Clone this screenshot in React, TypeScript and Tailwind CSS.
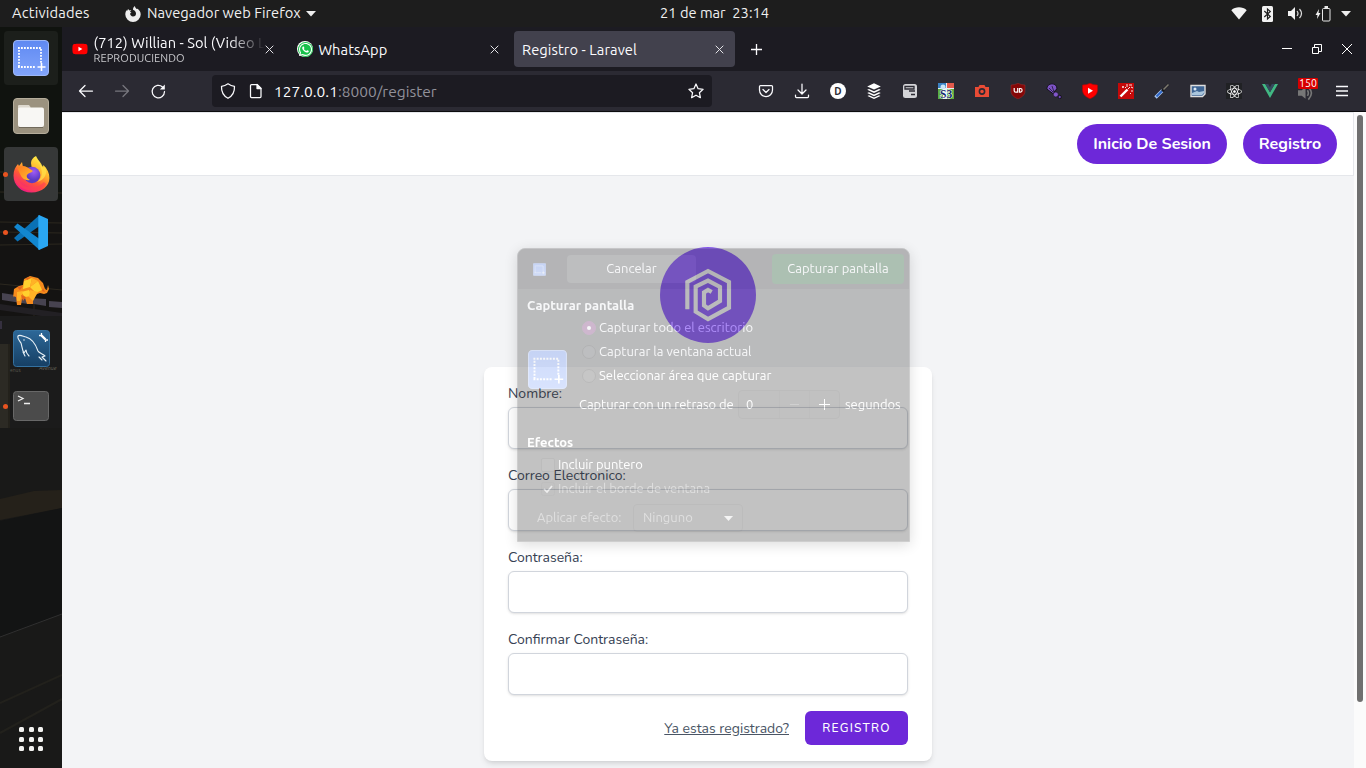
import React from "react";
import { FaYoutube, FaWhatsapp, FaReact } from "react-icons/fa";

const ubuntu = "font-['Ubuntu','Noto_Sans',sans-serif]";
const nunito = "font-['Nunito','Open_Sans',sans-serif]";

function Close() {
  return (
    <svg width="9" height="9" viewBox="0 0 9 9" stroke="#e4e4e8" strokeWidth="1">
      <path d="M.7.7l7.6 7.6M8.3.7L.7 8.3" />
    </svg>
  );
}

function TopBar() {
  return (
    <header className="relative flex h-[27px] shrink-0 items-center bg-[#1d1d1d] text-[14.667px] text-[#f0f0f0]">
      <span className="ml-3 w-[78px] whitespace-nowrap pb-px tracking-[0.2px]">Actividades</span>
      <svg className="ml-[35px]" width="16" height="16" viewBox="0 0 16 16">
        <path fill="#eee" d="M8 16a7.7 7.7 0 0 1-7.7-7.6c0-2 .7-3.4 1.4-4.4l.2 1.3L3.1 3l1.3 1.4c.7-.2 1.5-.1 2 .2-.8.4-1.3.8-1.3 1.5l1.4.3-1.4 1.2c.1 1.6 1.2 2.9 2.9 2.9 2 0 3-1.500 3-3.100C11 5.500 9.400 4.300 8 3.700 8 2.200 8.700.8 9.900 0c.2 1.300.9 2.200 1.700 2.900l1-.1c2 1.400 3.100 3.300 3.100 5.600A7.700 7.700 0 0 1 8 16z" />
      </svg>
      <span className="ml-[6px] w-[155px] whitespace-nowrap pb-px tracking-[0.04px]">Navegador web Firefox</span>
      <svg className="ml-1" width="10" height="6" viewBox="0 0 10 6"><path d="M0 0h10L5 5.500z" fill="#eee" /></svg>
      <span className="ml-[344px] w-[111px] whitespace-pre pb-px">21 de mar  23:14</span>
      <div className="ml-auto flex items-center pr-[15px]">
        <svg width="16" height="13" viewBox="0 0 16 13"><path d="M.3 3.200C4.500-.6 11.500-.6 15.700 3.200L8 12.500z" fill="#f2f2f2" /></svg>
        <svg className="ml-[15px]" width="11" height="16" viewBox="0 0 11 16">
          <rect width="11" height="16" rx="1.500" fill="#f2f2f2" />
          <path d="M2.300 5l6 5.500L5.500 13V3l2.800 2.500-6 5.500" fill="none" stroke="#1d1d1d" strokeWidth="1.200" />
        </svg>
        <svg className="ml-[15px]" width="15" height="13" viewBox="0 0 15 13">
          <path d="M0 4h3l4-4v13L3 9H0z" fill="#f2f2f2" />
          <path d="M9 4q2 2.500 0 5M11.500 2q4 4.500 0 9" fill="none" stroke="#ddd" strokeWidth="1.200" />
        </svg>
        <svg className="ml-[12px]" width="16" height="16" viewBox="0 0 16 16">
          <path d="M4 3L.5 9h2L2 13l3.500-6h-2z" fill="#f2f2f2" />
          <rect x="7.500" y="2.500" width="7.500" height="12.500" rx="1" fill="none" stroke="#e8e8e8" />
          <path d="M9.500 1h3.500" stroke="#e8e8e8" strokeWidth="2" />
        </svg>
        <svg className="ml-[10px]" width="10" height="6" viewBox="0 0 10 6"><path d="M0 0h10L5 5.500z" fill="#eee" /></svg>
      </div>
    </header>
  );
}

function ShotIcon({ size }: { size: number }) {
  return (
    <svg width={size} height={size} viewBox="0 0 36 36">
      <defs>
        <linearGradient id="shot" x2="0" y2="1"><stop stopColor="#5f89f2" /><stop offset="1" stopColor="#82a5fb" /></linearGradient>
      </defs>
      <rect x=".5" y=".5" width="35" height="35" rx="3.500" fill="url(#shot)" stroke="#9db7f7" />
      <path d="M5 8h24M6 10v17M5 27h18M28 9v15" stroke="#fff" strokeWidth="1.800" strokeDasharray="1.800 1.200" fill="none" />
      <path d="M24.500 27h8M28.500 23v8" stroke="#fff" strokeWidth="1.600" />
    </svg>
  );
}

function FirefoxIcon() {
  return (
    <svg width="37" height="38" viewBox="0 0 37 38">
      <defs>
        <linearGradient id="ffa" x1=".8" y1=".05" x2=".25" y2="1">
          <stop stopColor="#fff24a" /><stop offset=".35" stopColor="#ffb32c" /><stop offset=".62" stopColor="#ff5a36" /><stop offset="1" stopColor="#f0148a" />
        </linearGradient>
        <radialGradient id="ffb" cx=".6" cy=".3"><stop stopColor="#a05cf5" /><stop offset="1" stopColor="#5b3bc4" /></radialGradient>
        <linearGradient id="ffc" x2="1" y2="1"><stop stopColor="#ff7a22" /><stop offset="1" stopColor="#ffc02e" /></linearGradient>
      </defs>
      <path fill="url(#ffa)" d="M23 1c1 3 4 5 5 9l2 2 .4-2c4 4 6 8 6 13C36.400 31 29 37.500 18.500 37.500 8 37.500.5 30 .5 20.500c0-5 2-9 4.500-11.500L6 11l3-4 1 5 6 1 3 2-1-7c0-3 2-5.500 5-7z" />
      <circle cx="19" cy="20" r="8.300" fill="url(#ffb)" />
      <path fill="url(#ffc)" d="M4 12l6-1c3 0 5 2 7 3l3 2c-2 2-5 2-6 4-1 2 1 4 3 5-4 1-8-1-10-6z" />
      <path fill="#ffe14a" d="M22 2c1 4 5 6 6 11 2 6 0 11-4 14 8-2 11-9 8-15l-2 1c-1-6-6-8-8-11z" opacity=".75" />
      <path fill="none" stroke="#ff3f55" strokeWidth="3" d="M3 23c2 7 8 11 15 11 6 0 11-2 14-6" opacity=".65" />
    </svg>
  );
}

function VsCode() {
  return (
    <svg width="35" height="35" viewBox="0 0 35 35">
      <path fill="#0a71b5" d="M0 23l3.500 3.500L25.500 11V0z" />
      <path fill="#1287d0" d="M0 12l3.500-3.500L25.500 24v11z" />
      <path fill="#2aa7f3" d="M25 0l9 4v27l-9 4c-.8-.3-.7-1-.7-1.500V1.500C24.300.8 24.300.3 25 0z" />
    </svg>
  );
}

function Elephant() {
  return (
    <svg width="38" height="31" viewBox="0 0 38 31">
      <path fill="#f58a1c" d="M1 23L2 14l5-3 4-1 1-6 6-3 8 2 5 5 2 6 2 1 1-5 1 4-2 4-3 1-4-1-3 1-4 2v8h-6l-2-6-3 1-1 6H5l-1-8-3-1z" />
      <path fill="#ffd02e" d="M12 6l8-3-2 9-7 2zM18 12l8-6 4 9-6 3zM9 17l8-2 3 6-7 1z" />
      <path fill="#ffb226" d="M20 3l6 3-8 6zM18 15l8 2-5 9-4-4zM5 17l6-1-3 10H5z" />
      <path fill="#e2641c" d="M5 12l6-1-3 4zM14 3l6-1-5 3zM31 13l2 4-3-1zM9 20l5 2-3 4z" />
    </svg>
  );
}

function Mysql() {
  return (
    <svg width="37" height="37" viewBox="0 0 37 37">
      <defs><linearGradient id="my" x2="0" y2="1"><stop stopColor="#2d6898" /><stop offset="1" stopColor="#163f64" /></linearGradient></defs>
      <rect x=".5" y=".5" width="36" height="36" rx="3" fill="url(#my)" stroke="#3471a0" />
      <path fill="none" stroke="#e9f1f7" strokeWidth="1.100" strokeLinecap="round" strokeLinejoin="round" d="M16 26c-2-2-3-4-3-6l-2 3c-2-3-2-7-3-10-2-3-4-5-3-7 2-2 6 1 8 1 7 2 10 8 12 14 1 2 5 3 7 5l-3 1 4 4M26 27l3 3M10 22l2 4" />
      <circle cx="11" cy="10" r=".7" fill="#fff" />
      <path d="M28.500 5.500l4 4" stroke="#fff" strokeWidth="2.400" />
      <path d="M26 5.500h2.500V3M32.500 12V10H35" stroke="#fff" strokeWidth="1.300" fill="none" />
    </svg>
  );
}

function DockTile({ children, running, className = "" }: { children: React.ReactNode; running?: boolean; className?: string }) {
  return (
    <div className={"relative flex size-[54px] items-center justify-center rounded-[4px] " + className}>
      {running && <span className="absolute -left-px top-[25px] size-[5px] rounded-full bg-[#e95420]" />}
      {children}
    </div>
  );
}

function Dock() {
  return (
    <aside className="relative flex w-[62px] shrink-0 flex-col items-center gap-1 overflow-hidden bg-[#151515] pt-1">
      <svg className="absolute left-0 top-0" width="62" height="741" viewBox="0 27 62 741">
        <path fill="#10130f" d="M0 27h62v173H0z" />
        <path fill="#141312" d="M0 200h62v120H0z" />
        <path stroke="#2c281f" fill="none" d="M0 172h30M0 192l62 1M0 222l62 1M0 232l62 1M0 245l62-1M0 284l62 6M34 303v20" />
        <path fill="#474350" d="M2 293l26 4v7l-26-4zM28 298l18 1v7l-18-3zM49 301l13 1v6l-13-1z" />
        <path fill="#222024" d="M0 304l62 9v6L0 310z" />
        <path fill="#1b1b1b" d="M0 316h62v112H0z" />
        <path fill="#35303f" d="M0 321h2v8H0z" />
        <path fill="#2c2a24" d="M0 344h8v84H0z" />
        <path fill="#23211b" d="M8 344h2v84H8z" />
        <path fill="#191918" d="M0 428h62v340H0z" />
        <path fill="#25211a" d="M0 499l34-8 28-1v18L0 520z" />
        <path fill="#131414" d="M0 521l62-13v106L0 637z" />
        <path stroke="#303030" d="M0 637l62-23" />
        <path stroke="#22211c" strokeWidth="2" d="M0 703l62-28M0 733l62-34" />
        <text x="10" y="372" fontSize="5" fill="#5a574c">enus</text>
        <text x="39" y="370" fontSize="5.500" fill="#6a675c" fontStyle="italic">Avenue</text>
      </svg>
      <DockTile className="bg-white/5"><ShotIcon size={36} /></DockTile>
      <DockTile>
        <svg width="36" height="36" viewBox="0 0 36 36">
          <rect x=".5" y=".5" width="35" height="35" rx="3.500" fill="#9b927f" stroke="#b5ad9b" />
          <path d="M5 11V8q0-1 1-1h10l1.500 2v3z" fill="#ded9cf" />
          <rect x="5" y="9.500" width="26" height="19.500" rx="2" fill="#f8f7f4" />
          <path d="M6 29.500h24" stroke="#716a5b" />
        </svg>
      </DockTile>
      <DockTile running className="bg-[#363838]"><FirefoxIcon /></DockTile>
      <DockTile running><VsCode /></DockTile>
      <DockTile><Elephant /></DockTile>
      <DockTile><Mysql /></DockTile>
      <DockTile running>
        <svg width="36" height="30" viewBox="0 0 36 30">
          <rect x=".5" y=".5" width="35" height="29" rx="3" fill="#4b4b4b" stroke="#686868" />
          <path d="M5 5l5 2.500L5 10M11 12.500h6" stroke="#eee" strokeWidth="1.300" fill="none" />
        </svg>
      </DockTile>
      <div className="relative mb-[17px] mt-auto grid grid-cols-3 gap-[4.500px]">
        {Array.from({ length: 9 }, (_, i) => <span key={i} className="size-[5px] rounded-[1.500px] bg-[#f3f3f1]" />)}
      </div>
    </aside>
  );
}

function Tabs() {
  return (
    <div className="flex h-11 items-center gap-1 bg-[#1c1b22] pl-[2px] text-[14.667px] text-[#fbfbfe]">
      <div className="flex h-9 w-[221px] items-center pl-2">
        <FaYoutube size={16} color="#f00" className="shrink-0 [background:radial-gradient(circle,#fff_3px,transparent_3px)]" />
        <div className="ml-[5.500px] w-[171px] overflow-hidden whitespace-nowrap [mask-image:linear-gradient(to_right,#000_135px,transparent_171px)]">
          <div className="h-[17px] leading-[17px] tracking-[0.05px]">(712) Willian - Sol (Video L</div>
          <div className="h-[14px] text-[11px] leading-[14px] tracking-[0.08px] text-[#c8c8cc]">REPRODUCIENDO</div>
        </div>
        <Close />
      </div>
      <div className="flex h-9 w-[221px] items-center pl-2">
        <span className="flex size-4 items-center justify-center rounded-full bg-[#fff]">
          <span className="flex size-[15px] items-center justify-center rounded-full bg-[#16c14a]"><FaWhatsapp size={15} color="#fff" /></span>
        </span>
        <span className="ml-[5.500px] w-[171px] pt-px tracking-[0.08px]">WhatsApp</span>
        <Close />
      </div>
      <div className="flex h-9 w-[221px] items-center rounded-[4px] bg-[#42414d] pl-2">
        <span className="w-[192.500px] pt-px tracking-[0.08px]">Registro - Laravel</span>
        <Close />
      </div>
      <svg className="ml-[11px]" width="13" height="13" viewBox="0 0 13 13"><path d="M6.500 1v11M1 6.500h11" stroke="#fbfbfe" strokeWidth="1.300" /></svg>
      <div className="ml-auto flex items-center gap-[20px] pr-[14px]">
        <svg width="10" height="10" viewBox="0 0 10 10"><path d="M0 4.500h10" stroke="#fff" /></svg>
        <svg width="10" height="10" viewBox="0 0 10 10" fill="none" stroke="#fff"><path d="M.5 3.500h6v6h-6zM2.500 3V.5h7v7H7" /></svg>
        <svg width="10" height="10" viewBox="0 0 10 10" stroke="#fff"><path d="M0 0l10 10M10 0L0 10" /></svg>
      </div>
    </div>
  );
}

const line = { fill: "none", stroke: "#fbfbfe", strokeWidth: 1.25, strokeLinecap: "round" as const, strokeLinejoin: "round" as const };

function Extensions() {
  const icons: React.ReactNode[] = [
    <svg width="16" height="16" viewBox="0 0 16 16" {...line}><path d="M2.500 2.500h11q1 0 1 1V7c0 4-3 6.500-6.500 6.500S1.500 11 1.500 7V3.500q0-1 1-1z" /><path d="M5 6.500l3 3 3-3" /></svg>,
    <svg width="16" height="16" viewBox="0 0 16 16" {...line}><path d="M8 1v9.500M4 7l4 4 4-4M1.500 12v1.500q0 1 1 1h11q1 0 1-1V12" /></svg>,
    <span className="flex size-4 items-center justify-center rounded-full bg-white text-[10px] font-bold text-[#2b2a33]">D</span>,
    <svg width="16" height="16" viewBox="0 0 16 16" fill="#fff"><path d="M8 .3l6.800 3.100L8 6.500 1.200 3.400zM3 6l5 2.300L13 6l1.800.8L8 10 1.200 6.800zM3 9.300l5 2.300 5-2.300 1.800.8L8 13.200l-6.800-3.100zM3 12.300l5 2.300 5-2.300 1.500.7L8 16l-6.500-3z" /></svg>,
    <svg width="16" height="16" viewBox="0 0 16 16"><rect x="1" y="1" width="14" height="14" rx="2.500" fill="#d4d4d8" /><path d="M3 3.500h9v2.500H3zM7 8h6M9 11.500h4" fill="none" stroke="#2b2a33" strokeWidth="1.300" /></svg>,
    <svg width="16" height="16" viewBox="0 0 16 16"><path fill="#e8f0f5" d="M0 0h16v16H0z" /><path fill="#3b82c4" d="M0 0h8v5H0z" /><path fill="#e25a4c" d="M9 0h7v5H9z" /><path fill="#5cac42" d="M0 6h5v10H0zM9 6h7v10H9z" /><circle cx="5" cy="4" r="2.500" fill="#cde7f7" /><text x="2" y="15" fontSize="11.500" fontWeight="bold" fontFamily="Liberation Serif" fill="#132b70" stroke="#fff" strokeWidth="1" paintOrder="stroke">S3</text></svg>,
    <svg width="16" height="16" viewBox="0 0 16 16"><path d="M1 4h3.500l1-2h5l1 2H15v10H1z" fill="#e94b35" /><circle cx="8" cy="8.500" r="2.600" fill="none" stroke="#2b2a33" strokeWidth="1.600" /></svg>,
    <svg width="16" height="16" viewBox="0 0 16 16"><path d="M8 .3q3 1.700 7 1.700v6c0 4.500-4 6.500-7 8-3-1.500-7-3.500-7-8V2q4 0 7-1.700z" fill="#850707" stroke="#9a3030" strokeWidth=".5" /><path d="M4.200 5v2.700q0 1.500 1.500 1.500h2V5M9.500 5.500h1q1.600 0 1.600 1.800t-1.600 1.800h-1z" fill="none" stroke="#fff" strokeWidth="1.200" /></svg>,
    <svg width="16" height="16" viewBox="0 0 16 16"><path d="M.8 6C.8 3 3 .8 6 .8s5 2 5 5.200L8.500 8 7.500 11z" fill="#7c52c4" stroke="#15121d" /><path d="M7 9L3 5M8 9L6 3" stroke="#15121d" strokeWidth=".7" /><circle cx="9.800" cy="11.500" r="2.500" fill="#8257cc" stroke="#15121d" strokeWidth=".6" /><circle cx="13.700" cy="14" r="1.700" fill="#6f48b5" stroke="#15121d" /></svg>,
    <svg width="16" height="16" viewBox="0 0 16 16"><path d="M8 .3q3 1.700 7.500 1.700v5c0 5-4.500 7.500-7.500 8.800C5 14.500.5 12 .5 7V2Q5 2 8 .3z" fill="#f00" stroke="#a80808" strokeWidth=".7" /><path d="M6 4.800l5 3-5 3z" fill="#fff" /></svg>,
    <svg width="16" height="16" viewBox="0 0 16 16"><path fill="#c50909" d="M0 0h16v16H0z" /><path d="M2.500 13.500l7-7" stroke="#fff" strokeWidth="2.400" /><path d="M10 6l2-2M5 3v2M4 4h2M9 1v3M13 8h2M12 10l1 1M7 4l1 1M11 2h3M13 4l2 1" stroke="#fff" strokeWidth=".9" /></svg>,
    <svg width="16" height="16" viewBox="0 0 16 16"><path d="M1.500 14.500L8.500 7.500" stroke="#a9c6ef" strokeWidth="3.400" /><path d="M2.500 13.500L8 8" stroke="#2b63c5" strokeWidth="1.800" /><path d="M8 6.500l2 2M9 7l5.500-5.500" stroke="#17171a" strokeWidth="2.400" /><path d="M9.500 6.500l5-5" stroke="#7d7a72" strokeWidth="1.600" /></svg>,
    <svg width="16" height="16" viewBox="0 0 16 16"><path d="M1 2.500h14v8.500l-2.500 2.500H1z" fill="#3e6594" stroke="#dedede" strokeWidth="1.400" /><path d="M2 10l5-2 2 1 5-1v2l-2 2H2z" fill="#a9c5dc" /><circle cx="5" cy="6" r="1.500" fill="#dce9f5" /></svg>,
    <span className="flex size-4 items-center justify-center bg-[#202124]"><FaReact size={15} color="#fff" /></span>,
    <svg width="16" height="14" viewBox="0 0 16 14"><path d="M0 0h3.200L8 8.300 12.800 0H16L8 14z" fill="#41b883" /><path d="M3.200 0h3L8 3.200 9.800 0h3L8 8.300z" fill="#35495e" /></svg>,
    <span className="relative flex h-5 w-4 items-end"><svg width="17" height="15" viewBox="0 0 17 15"><path d="M0 4h4l4-4v13L4 10H0z" fill="#777" /><path d="M10 4q2 3 0 6M12 2q5 5-1 12" fill="none" stroke="#777" strokeWidth="1.700" /></svg><span className="absolute -top-[3px] left-0 flex h-[11px] w-[20px] items-center justify-center rounded-[1px] bg-[#d70000] text-[10.500px] leading-none text-white">150</span></span>,
    <svg width="16" height="16" viewBox="0 0 16 16" stroke="#fbfbfe" strokeWidth="1.500"><path d="M2 3.500h12M2 8h12M2 12.500h12" /></svg>,
  ];
  return (
    <div className="ml-auto flex pr-[6px]">
      {icons.map((icon, i) => <span key={i} className="flex w-9 items-center justify-center">{icon}</span>)}
    </div>
  );
}

function Toolbar() {
  return (
    <div className="flex h-[41px] items-center border-b border-[#0c0c0d] bg-[#2b2a33]">
      <svg className="ml-4" width="16" height="16" viewBox="0 0 16 16" {...line}><path d="M7 2.500L1.500 8 7 13.500M2 8h12.500" /></svg>
      <svg className="ml-5" width="16" height="16" viewBox="0 0 16 16" {...line} stroke="#77767e"><path d="M9 2.500L14.500 8 9 13.500M14 8H1.500" /></svg>
      <svg className="ml-5" width="16" height="16" viewBox="0 0 16 16" {...line}><path d="M12.500 4A6.200 6.200 0 1 0 14.500 8.500" /><path d="M14.800 1.500v5H9.800z" fill="#fbfbfe" stroke="none" /></svg>
      <div className="ml-[46px] flex h-8 w-[500px] items-center rounded-[4px] bg-[#1c1b22] pl-2 pr-2">
        <svg width="16" height="16" viewBox="0 0 16 16" {...line}><path d="M8 .8q3 2.200 6.500 2.500c.2 5-1.500 9.500-6.500 12C3 12.800 1.300 8.300 1.500 3.300Q5 3 8 .8z" /></svg>
        <svg className="ml-3" width="16" height="16" viewBox="0 0 16 16" {...line}><path d="M3.500 1.500h5.500L13 5.500v8q0 1-1 1H3.500q-1 0-1-1v-11q0-1 1-1z" /><path d="M9 1.500V5.500h4z" fill="#fbfbfe" /></svg>
        <span className="ml-[10px] pt-px text-[15.500px] text-[#fbfbfe]">127.0.0.1<span className="text-[#92919a]">:8000/register</span></span>
        <svg className="ml-auto" width="16" height="16" viewBox="0 0 16 16" {...line}><path d="M8 1l2.100 4.700 5 .6-3.700 3.400 1 5L8 12.200l-4.400 2.500 1-5L.9 6.300l5-.6z" /></svg>
      </div>
      <Extensions />
    </div>
  );
}

function Logo() {
  return (
    <svg width="96" height="96" viewBox="0 0 288 288">
      <circle cx="144" cy="144" r="144" fill="#8b5cf6" />
      <path fill="none" stroke="#f3f4f6" strokeWidth="12.500" d="M82 187V105L144 72l63 33v77l-63 34-37-22v-75l37-18 36 19v42l-36 22-12-9v-39l12-7 11 6" />
    </svg>
  );
}

function Field({ label }: { label: string }) {
  return (
    <label className="block">
      <span className="block h-5 pt-px text-[14px] leading-5 text-gray-700">{label}</span>
      <input className="mt-1 block h-[42px] w-full rounded-md border border-gray-300 bg-white shadow-sm" />
    </label>
  );
}

function Page() {
  return (
    <div className={"flex min-h-0 flex-1 bg-[#fbfbfb] " + nunito}>
      <main className="flex w-[1292px] flex-col overflow-hidden bg-[#f3f4f6]">
        <nav className="flex h-16 shrink-0 items-center justify-end gap-4 border-b border-r border-t border-[#e5e7eb] bg-white pr-4 text-[16px] font-bold text-white">
          <a className="flex h-10 w-[150px] items-center justify-center rounded-full bg-[#6d28d9]">Inicio De Sesion</a>
          <a className="flex h-10 w-[94px] items-center justify-center rounded-full bg-[#6d28d9]">Registro</a>
        </nav>
        <div className="flex flex-col items-center pt-[71px]">
          <Logo />
          <form className="mt-6 flex w-[448px] flex-col gap-4 rounded-lg bg-white px-6 py-4 shadow-md">
            <Field label="Nombre:" />
            <Field label="Correo Electronico:" />
            <Field label="Contraseña:" />
            <Field label="Confirmar Contraseña:" />
            <div className="flex h-[34px] items-center justify-end gap-4">
              <a className="text-[14px] text-gray-600 underline">Ya estas registrado?</a>
              <button type="button" className="h-[34px] w-[103px] rounded-md bg-[#6d28d9] text-[12px] font-medium tracking-[1.2px] text-white">REGISTRO</button>
            </div>
          </form>
        </div>
      </main>
      <div className="ml-[3px] mt-[3px] h-[587px] w-[6px] rounded-full bg-[#6f6f6f]" />
    </div>
  );
}

function Radio({ label, on }: { label: string; on?: boolean }) {
  return (
    <div className="flex h-6 items-center">
      <span className={"mr-[3px] flex size-[14px] items-center justify-center rounded-full border " + (on ? "border-[#7a2f74] bg-[#7a2f74]" : "border-[#1c1c1c] bg-[#454545]")}>
        {on && <span className="size-1 rounded-full bg-white" />}
      </span>
      {label}
    </div>
  );
}

function Dialog() {
  return (
    <section className="absolute left-[517px] top-[248px] h-[294px] w-[393px] overflow-hidden rounded-t-lg border border-[#606060] bg-[#3a3a3a] text-[13px] text-white opacity-30 shadow-[0_3px_14px_rgba(0,0,0,0.45)]">
      <div className="flex h-[40px] items-center bg-[#252525] pl-[15px] pr-[5px]">
        <ShotIcon size={13} />
        <span className="ml-[21px] flex h-7 w-[129px] items-center justify-center rounded-[4px] bg-[#434343]">Cancelar</span>
        <span className="ml-auto flex h-[30px] w-[132px] items-center justify-center rounded-[4px] bg-[#0c4a1a]">Capturar pantalla</span>
      </div>
      <div className="ml-[9px] mt-[6px] h-[20px] font-bold leading-5">Capturar pantalla</div>
      <div className="ml-[10px] flex h-[73px] pt-px">
        <div className="mt-[34px] h-[38px] w-[54px] shrink-0"><ShotIcon size={39} /></div>
        <div className="whitespace-nowrap">
          <Radio label="Capturar todo el escritorio" on />
          <Radio label="Capturar la ventana actual" />
          <Radio label="Seleccionar área que capturar" />
        </div>
      </div>
      <div className="ml-[61px] mt-[2px] flex h-[29px] items-center whitespace-nowrap tracking-[-0.05px]">
        <span className="w-[159px]">Capturar con un retraso de</span>
        <span className="flex h-[29px] w-[102px] items-center rounded-[4px] border border-[#252525] bg-[#343434] pl-[7px]">
          <span className="w-[33px]">0</span>
          <span className="flex h-full w-[31px] items-center justify-center border-x border-[#2a2a2a]"><svg width="9" height="1" viewBox="0 0 9 1"><path d="M0 .5h9" stroke="#666" /></svg></span>
          <svg className="ml-[9px]" width="11" height="11" viewBox="0 0 11 11"><path d="M5.500 0v11M0 5.500h11" stroke="#fff" /></svg>
        </span>
        <span className="ml-[5px]">segundos</span>
      </div>
      <div className="ml-[9px] mt-[13px] h-5 font-bold leading-5">Efectos</div>
      <div className="ml-[23px] mt-px flex h-6 items-center tracking-[-0.08px]"><span className="mr-[3px] size-[14px] rounded-[2px] border border-[#242424] bg-[#414141]" />Incluir puntero</div>
      <div className="ml-[23px] flex h-6 items-center tracking-[-0.1px] text-[#999]">
        <svg className="mr-[3px]" width="14" height="14" viewBox="0 0 14 14"><rect x=".5" y=".5" width="13" height="13" rx="2" fill="#383838" stroke="#2c2c2c" /><path d="M3 7l3 3 5-6" stroke="#ccc" strokeWidth="1.700" fill="none" /></svg>
        Incluir el borde de ventana
      </div>
      <div className="ml-[19px] mt-[3px] flex h-7 items-center text-[#999]">
        <span className="w-[96px]">Aplicar efecto:</span>
        <span className="flex h-7 w-[110px] items-center justify-between rounded-[4px] border border-[#262626] px-[9px]">Ninguno<svg width="9" height="5" viewBox="0 0 9 5"><path d="M0 0h9L4.500 5z" fill="#ddd" /></svg></span>
      </div>
    </section>
  );
}

export default function App() {
  return (
    <div className={"relative flex h-[768px] w-[1366px] flex-col overflow-hidden " + ubuntu}>
      <TopBar />
      <div className="flex min-h-0 flex-1">
        <Dock />
        <div className="flex w-[1304px] flex-col">
          <Tabs />
          <Toolbar />
          <Page />
        </div>
      </div>
      <Dialog />
    </div>
  );
}
